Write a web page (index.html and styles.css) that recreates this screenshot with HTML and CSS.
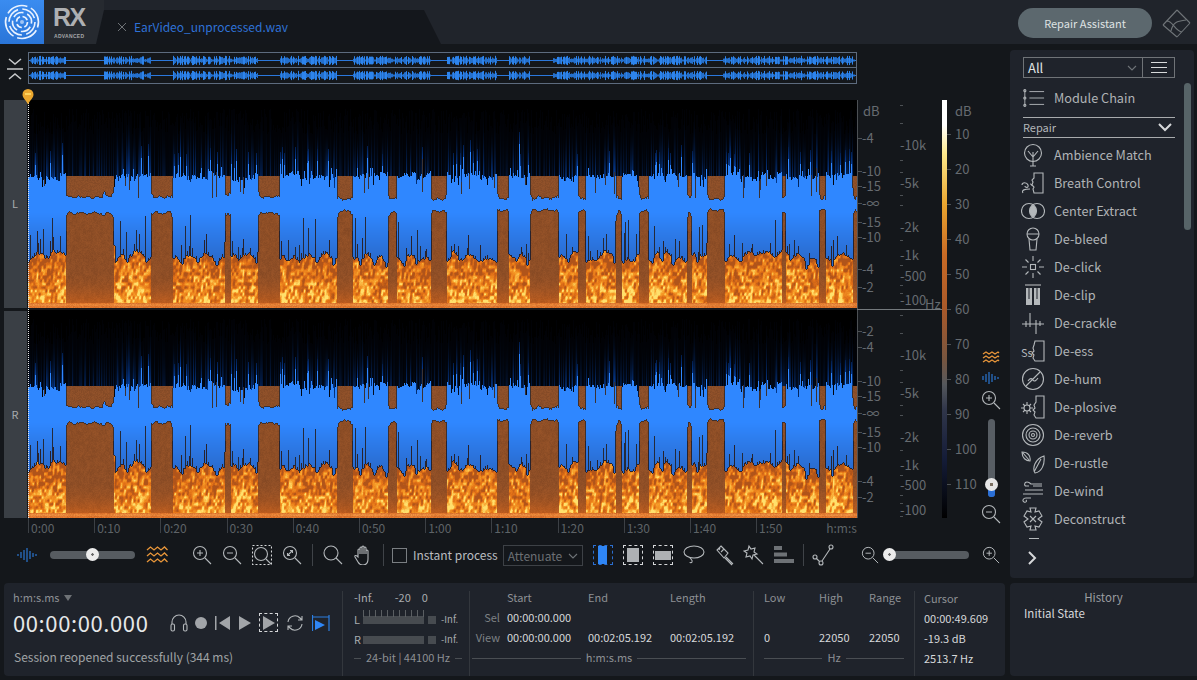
FILE: index.html
```html
<!DOCTYPE html>
<html lang="en">
<head>
<meta charset="utf-8">
<title>RX Advanced</title>
<link rel="stylesheet" href="styles.css">
</head>
<body>
<header class="topbar">
  <div class="logo">
    <svg viewBox="0 0 44 44" width="44" height="44" class="logo-svg">
      <circle cx="22" cy="22" r="2" class="l1"/>
      <circle cx="22" cy="22" r="5.5" class="l2 d1"/>
      <circle cx="22" cy="22" r="9.5" class="l2 d2"/>
      <circle cx="22" cy="22" r="13" class="l2 d3"/>
      <circle cx="22" cy="22" r="16.5" class="l2 d4"/>
    </svg>
  </div>
  <div class="brand"><span class="rx">RX</span><span class="adv">ADVANCED</span></div>
  <div class="tab">
    <svg viewBox="0 0 12 12" width="12" height="12" class="tab-x"><path d="M2 2l8 8M10 2l-8 8"/></svg>
    <span class="tab-name">EarVideo_unprocessed.wav</span>
  </div>
  <div class="top-right">
    <button class="assist">Repair Assistant</button>
    <svg viewBox="0 0 32 32" width="32" height="32" class="ic dim"><path d="M3 18L17 3M17 30L30 16M3 18l14 12M17 3l13 13M7 14c6 0 8 10 15 11M11 24c2-10 8-10 15-11"/></svg>
  </div>
</header>

<div class="main">
  <section class="work">
    <div class="overview-row">
      <svg viewBox="0 0 16 24" width="16" height="24" class="ic collapse"><path d="M2 2l6 5 6-5M0 12h16M2 22l6-5 6 5"/></svg>
      <canvas id="overview" width="829" height="33" class="overview"></canvas>
    </div>
    <div class="spectro">
      <div class="chan-col">
        <div class="chan">L</div>
        <div class="chan">R</div>
      </div>
      <div class="canvas-wrap">
        <canvas id="spec" width="829" height="418" class="spec"></canvas>
        <div class="playline"></div>
        <svg viewBox="0 0 12 16" width="12" height="16" class="pin"><path d="M6 15.5C4 11 .5 9 .5 5.5a5.5 5.5 0 0 1 11 0C11.500 9 8 11 6 15.500z"/><path class="pin-hi" d="M3 5h6"/></svg>
      </div>
      <div class="side">
        <svg id="ruler" class="ruler" width="124" height="430" viewBox="857 100 124 430"></svg>
        <div class="vtools">
          <svg viewBox="0 0 20 16" width="20" height="16" class="ic orange"><path d="M2 4l3-2 3 2 3-2 3 2 3-2 1 1M2 8l3-2 3 2 3-2 3 2 3-2 1 1M2 12l3-2 3 2 3-2 3 2 3-2 1 1"/></svg>
          <svg viewBox="0 0 20 16" width="20" height="16" class="ic blue"><path d="M2 6v4M5 4v8M8 2v12M11 4v8M14 6v4M17 7v2"/></svg>
          <svg viewBox="0 0 20 20" width="20" height="20" class="ic"><circle cx="8" cy="8" r="6.500"/><path d="M13 13l6 6M5 8h6M8 5v6"/></svg>
          <div class="vslider"><span class="vfill"></span><span class="vthumb"></span></div>
          <svg viewBox="0 0 20 20" width="20" height="20" class="ic"><circle cx="8" cy="8" r="6.500"/><path d="M13 13l6 6M5 8h6"/></svg>
        </div>
      </div>
    </div>
    <div class="timeline">
      <span>0:00</span><span>0:10</span><span>0:20</span><span>0:30</span><span>0:40</span><span>0:50</span><span>1:00</span><span>1:10</span><span>1:20</span><span>1:30</span><span>1:40</span><span>1:50</span><b>h:m:s</b>
    </div>
    <div class="toolbar">
      <svg viewBox="0 0 20 16" width="20" height="16" class="ic blue t-first"><path d="M1 7v2M4 5v6M7 3v10M10 1v14M13 4v8M16 6v4M19 7v2"/></svg>
      <div class="hslider mid"><span class="hthumb"></span></div>
      <svg viewBox="0 0 22 20" width="22" height="20" class="ic orange t-wave"><path d="M1 5l3.500-3 3.500 3 3.500-3 3.500 3 3.500-3 3 3M1 11l3.500-3 3.500 3 3.500-3 3.500 3 3.500-3 3 3M1 17l3.500-3 3.500 3 3.500-3 3.500 3 3.500-3 3 3"/></svg>
      <div class="slots first-slots">
        <svg viewBox="0 0 20 20" width="20" height="20" class="ic"><circle cx="8" cy="8" r="6.500"/><path d="M13 13l6 6M5 8h6M8 5v6"/></svg>
        <svg viewBox="0 0 20 20" width="20" height="20" class="ic"><circle cx="8" cy="8" r="6.500"/><path d="M13 13l6 6M5 8h6"/></svg>
        <svg viewBox="0 0 20 20" width="20" height="20" class="ic"><rect x=".5" y=".5" width="19" height="19" class="dash"/><circle cx="9" cy="9" r="6.500"/><path d="M14 14l5 5"/></svg>
        <svg viewBox="0 0 20 20" width="20" height="20" class="ic"><circle cx="8" cy="8" r="6.500"/><path d="M13 13l6 6M5.500 10.500l5-5M8 5.500h2.500V8M5.500 8v2.500H8"/></svg>
        <i class="sep"></i>
        <svg viewBox="0 0 20 20" width="20" height="20" class="ic"><circle cx="8" cy="8" r="7"/><path d="M13 13l6 6"/></svg>
        <svg viewBox="0 0 20 20" width="20" height="20" class="ic"><path d="M5 12V5a1 1 0 0 1 2 0v4-6a1 1 0 0 1 2 0v6-7a1 1 0 0 1 2 0v7-6a1 1 0 0 1 2 0v6-3a1 1 0 0 1 2 0v8c0 4-2 6-5 6s-4-1-5-3l-3-5c-.7-1.500 1-2 2-1z"/></svg>
        <i class="sep"></i>
      </div>
      <span class="check"></span>
      <span class="instant">Instant process</span>
      <span class="select">Attenuate<svg viewBox="0 0 10 6" width="10" height="6" class="ic dim chev"><path d="M1 1l4 4 4-4"/></svg></span>
      <div class="slots second-slots">
        <span class="selbox active"><i></i></span>
        <span class="selbox"><i class="sq"></i></span>
        <span class="selbox"><i class="wide"></i></span>
        <svg viewBox="0 0 22 20" width="22" height="20" class="ic"><ellipse cx="11" cy="7" rx="10" ry="6"/><path d="M7 12c0 3 3 2 2 5-.5 1-2 1-2 0"/></svg>
        <svg viewBox="0 0 22 22" width="22" height="22" class="ic"><path d="M8 2l7 7-4 5-7-8zM11 5l-3 3M7 4l-1 2M13 13l7 7M12 14l7 7"/></svg>
        <svg viewBox="0 0 22 22" width="22" height="22" class="ic"><path d="M6 2l2 3 4-1-1 4 3 2-4 1-1 4-2-3-4 1 1-4-3-2 4-1zM11 11l9 9"/></svg>
        <svg viewBox="0 0 22 18" width="22" height="18" class="ic-bars"><rect x="1" width="8" height="4"/><rect x="1" y="6.500" width="13" height="4"/><rect x="1" y="13" width="20" height="4"/></svg>
        <i class="sep"></i>
        <svg viewBox="0 0 22 22" width="22" height="22" class="ic"><circle cx="3" cy="13" r="2"/><circle cx="9" cy="19" r="2"/><circle cx="19" cy="3" r="2"/><path d="M4.500 14.500l3 3M10 17l8-12"/></svg>
      </div>
      <svg viewBox="0 0 20 20" width="18" height="18" class="ic t-zoomout"><circle cx="8" cy="8" r="6.500"/><path d="M13 13l6 6M5 8h6"/></svg>
      <div class="hslider low"><span class="hthumb"></span></div>
      <svg viewBox="0 0 20 20" width="18" height="18" class="ic t-zoomin"><circle cx="8" cy="8" r="6.500"/><path d="M13 13l6 6M5 8h6M8 5v6"/></svg>
    </div>
  </section>

  <aside class="modules">
    <div class="combo-row">
      <div class="combo"><span>All</span><svg viewBox="0 0 10 6" width="10" height="6" class="ic dim"><path d="M1 1l4 4 4-4"/></svg></div>
      <div class="burger"><i></i><i></i><i></i></div>
    </div>
    <div class="m-item chain">
      <svg viewBox="0 0 24 24" width="22" height="22" class="ic"><path d="M7 5h16M7 12h16M7 19h16M2 3v18" class="dots"/><circle cx="2" cy="4" r="1.200"/><circle cx="2" cy="12" r="1.200"/><circle cx="2" cy="20" r="1.200"/></svg>
      <span>Module Chain</span>
    </div>
    <div class="group"><span>Repair</span><svg viewBox="0 0 14 9" width="14" height="9" class="ic bright"><path d="M1 1l6 6 6-6"/></svg></div>
    <div class="m-item"><svg viewBox="0 0 24 24" width="24" height="24" class="ic"><circle cx="12" cy="10" r="8.500"/><path d="M12 23V9M7 8l5 6 5-6M9 23h6"/></svg><span>Ambience Match</span></div>
    <div class="m-item"><svg viewBox="0 0 24 24" width="24" height="24" class="ic"><path d="M13 2h9v20h-9l-1-4 1-2-2-2 1-3-1-2 2-2zM1 14c0-3 5-3 6 0s-3 3-3 1M2 22c-2-3 2-4 7-4M9 13c1 0 2 1 2 2"/></svg><span>Breath Control</span></div>
    <div class="m-item"><svg viewBox="0 0 24 24" width="24" height="24" class="ic"><circle cx="8" cy="12" r="7.500"/><circle cx="16" cy="12" r="7.500"/><path class="solid" d="M12 5.700a7.500 7.500 0 0 1 0 12.600 7.500 7.500 0 0 1 0-12.600z"/></svg><span>Center Extract</span></div>
    <div class="m-item"><svg viewBox="0 0 24 24" width="24" height="24" class="ic"><circle cx="12" cy="7" r="6"/><path d="M6 7h12M8 12l1 11h6l1-11"/></svg><span>De-bleed</span></div>
    <div class="m-item"><svg viewBox="0 0 24 24" width="24" height="24" class="ic"><rect x="9.500" y="9.500" width="5" height="5"/><path d="M12 1v5M12 18v5M1 12h5M18 12h5M4.500 4.500l3 3M16.500 16.500l3 3M19.500 4.500l-3 3M7.500 16.500l-3 3"/></svg><span>De-click</span></div>
    <div class="m-item"><svg viewBox="0 0 24 24" width="24" height="24" class="ic"><path d="M4 2h16"/><path class="solid" d="M5 5h6v17H5zM13 5h6v17h-6z"/><path class="cut" d="M8 5v11M16 5v11"/></svg><span>De-clip</span></div>
    <div class="m-item"><svg viewBox="0 0 24 24" width="24" height="24" class="ic"><path d="M1 13h22M9 2v14M15 9v14M5 10v6M19 10v5"/></svg><span>De-crackle</span></div>
    <div class="m-item"><svg viewBox="0 0 24 24" width="24" height="24" class="ic"><text x="0" y="18" class="ic-text">Ss</text><path d="M14 2h9v20h-9l-2-3 1-3-2-2 2-2-1-3 1-3z"/></svg><span>De-ess</span></div>
    <div class="m-item"><svg viewBox="0 0 24 24" width="24" height="24" class="ic"><circle cx="12" cy="12" r="10.500"/><path d="M5 19L19 5M7 14c2-3 4-3 5-1s3 1 5-2"/></svg><span>De-hum</span></div>
    <div class="m-item"><svg viewBox="0 0 24 24" width="24" height="24" class="ic"><path d="M15 1h8v22h-8l-2-3 1-3-2-2 2-2-1-3 2-3z"/><circle cx="6" cy="13" r="3"/><path d="M6 7v3M6 16v3M0 13h3M9 13h3M2 9l2 2M8 15l2 2M10 9l-2 2M4 15l-2 2"/></svg><span>De-plosive</span></div>
    <div class="m-item"><svg viewBox="0 0 24 24" width="24" height="24" class="ic"><circle cx="12" cy="12" r="10.500"/><circle cx="12" cy="12" r="7"/><circle cx="12" cy="12" r="4"/><circle cx="12" cy="12" r="1.500"/></svg><span>De-reverb</span></div>
    <div class="m-item"><svg viewBox="0 0 24 24" width="24" height="24" class="ic"><path d="M1 1c6 0 9 4 8 9-4 0-8-3-8-9zM2 2l6 7M23 5c1 8-2 16-9 17-3-5 0-14 9-17zM13 21l7-13"/></svg><span>De-rustle</span></div>
    <div class="m-item"><svg viewBox="0 0 24 24" width="24" height="24" class="ic"><path d="M8 7H5c-2 0-2-4 1-4 2 0 3 1 4 2h11M4 11h18M2 15h20M10 19H5c-3 0-4 3-2 4s3-1 2-2M12 7h9"/></svg><span>De-wind</span></div>
    <div class="m-item"><svg viewBox="0 0 24 24" width="24" height="24" class="ic"><path d="M9 1h6l-1 4 4-1 3 5-4 3 4 3-3 5-4-1 1 4H9l1-4-4 1-3-5 4-3-4-3 3-5 4 1zM9 9l6 6M15 9l-6 6"/></svg><span>Deconstruct</span></div>
    <div class="m-peek"><i></i></div>
    <svg viewBox="0 0 10 14" width="10" height="14" class="ic bright more"><path d="M2 1l6 6-6 6"/></svg>
    <div class="scroll"></div>
  </aside>
</div>

<footer class="bottom">
  <div class="info">
    <div class="transport">
      <div class="fmt">h:m:s.ms <i class="tri"></i></div>
      <div class="clock-row">
        <span class="clock">00:00:00.000</span>
        <div class="tbtns">
          <svg viewBox="0 0 18 18" width="18" height="18" class="ic"><path d="M2 10V8a7 7 0 0 1 14 0v2"/><rect x="1" y="10" width="3.500" height="7" rx="1.500"/><rect x="13.500" y="10" width="3.500" height="7" rx="1.500"/></svg>
          <span class="rec"></span>
          <svg viewBox="0 0 16 14" width="16" height="14" class="solid-ic"><path d="M0 0h1.500v14H0zM15 0v14L4 7z"/></svg>
          <svg viewBox="0 0 14 14" width="14" height="14" class="solid-ic"><path d="M1 0v14l12-7z"/></svg>
          <span class="playsel"><svg viewBox="0 0 14 14" width="14" height="14" class="solid-ic"><path d="M1 0v14l12-7z"/></svg></span>
          <svg viewBox="0 0 20 20" width="20" height="20" class="ic"><path d="M3 9a7 7 0 0 1 12-4l2 2M17 11a7 7 0 0 1-12 4l-2-2M17 3v4h-4M3 17v-4h4"/></svg>
          <svg viewBox="0 0 18 18" width="18" height="18" class="loop"><path class="loop-l" d="M.5 1v16M17 1v16M1 3h16"/><path class="loop-p" d="M3 6v10l10-5z"/></svg>
        </div>
      </div>
      <div class="status">Session reopened successfully (344 ms)</div>
    </div>
    <div class="meter">
      <div class="meter-scale"><span>-Inf.</span><span>-20</span><span>0</span></div>
      <div class="meter-row tick"><span>L</span><i></i><u></u><small>-Inf.</small></div>
      <div class="meter-row"><span>R</span><i></i><u></u><small>-Inf.</small></div>
      <div class="rule-label"><em></em><span>24-bit | 44100 Hz</span><em></em></div>
    </div>
    <div class="times">
      <div class="grid-times">
        <span></span><span class="h">Start</span><span class="h">End</span><span class="h">Length</span>
        <span class="rl">Sel</span><span>00:00:00.000</span><span></span><span></span>
        <span class="rl">View</span><span>00:00:00.000</span><span>00:02:05.192</span><span>00:02:05.192</span>
      </div>
      <div class="rule-label"><em></em><span>h:m:s.ms</span><em></em></div>
    </div>
    <div class="freq">
      <div class="grid-freq">
        <span class="h">Low</span><span class="h">High</span><span class="h">Range</span>
        <span></span><span></span><span></span>
        <span>0</span><span>22050</span><span>22050</span>
      </div>
      <div class="rule-label"><em></em><span>Hz</span><em></em></div>
    </div>
    <div class="cursor">
      <span class="h">Cursor</span>
      <span>00:00:49.609</span>
      <span>-19.3 dB</span>
      <span>2513.7 Hz</span>
    </div>
  </div>
  <div class="history">
    <div class="hist-title">History</div>
    <div class="hist-item">Initial State</div>
  </div>
</footer>
<script src="script.js"></script>
</body>
</html>
```
FILE: styles.css
```css
* { box-sizing: border-box; }
html, body { margin: 0; height: 680px; overflow: hidden; }
body {
  width: 1197px;
  background: #14171b;
  color: #c3c6c9;
  font: 12px/1.2 "Noto Sans CJK SC", "Noto Sans", sans-serif;
}
svg { display: block; flex: none; }
.ic { fill: none; stroke: #b4b8bb; stroke-width: 1.1; }
.ic.dim { stroke: #6f7478; }
.ic.bright { stroke: #d6d8da; stroke-width: 2; }
.ic.blue { stroke: #2c7ee0; }
.ic.orange { stroke: #e8963a; stroke-width: 1.3; }
.ic .dash { stroke: #d5d7d9; stroke-dasharray: 2 2; }
.ic .solid { fill: #b4b8bb; stroke: none; }
.ic .cut { stroke: #1f232b; stroke-width: 1; }
.ic-text { fill: #b4b8bb; stroke: none; font-size: 11px; }
.ic-bars { fill: #6e7276; }
.solid-ic { fill: #a2a5a9; }

/* top bar */
.topbar { display: flex; height: 44px; background: #20242b; }
.logo { width: 44px; height: 44px; background: linear-gradient(#3a8cf0, #2a75d8); }
.logo-svg { fill: none; stroke: #e9f2ff; }
.logo-svg .l1 { fill: #e9f2ff; stroke: none; opacity: .6; }
.logo-svg .l2 { stroke-width: 1.6; transform-origin: 22px 22px; }
.d1 { stroke-dasharray: 6 2.6; }
.d2 { stroke-dasharray: 11 4; transform: rotate(30deg); }
.d3 { stroke-dasharray: 16 4.400; }
.d4 { stroke-dasharray: 22 4; transform: rotate(30deg); }
.brand { width: 60px; padding: 5px 0 0 9px; display: flex; flex-direction: column; background: #262a30; }
.rx { font: 700 25px/25px "Liberation Sans", sans-serif; color: #aeb0b2; letter-spacing: -1.5px; }
.adv { font: 700 5px/6px "Liberation Sans", sans-serif; color: #a5a7a9; letter-spacing: .3px; margin: 3px 0 0 1px; }
.tab {
  margin: 10px 0 0 -8px; width: 345px; height: 34px; padding: 0 0 0 20px;
  background: #14171c; display: flex; align-items: center; gap: 6px;
  clip-path: polygon(8px 0, 328px 0, 100% 100%, 0 100%);
}
.tab-x { fill: none; stroke: #6e7276; }
.tab-name { color: #2f72d6; font-size: 12px; }
.top-right { margin-left: auto; padding: 7px 5px 0 0; display: flex; gap: 8px; align-items: flex-start; }
.assist {
  width: 134px; height: 30px; margin-top: 1px; border: 0; border-radius: 15px;
  background: #5c686e; color: #dfe2e3; font: 11px "Noto Sans CJK SC", sans-serif;
}

/* main */
.main { display: flex; height: 539px; }
.work { width: 1010px; }
.overview-row { display: flex; height: 41px; padding-top: 8px; align-items: flex-start; }
.collapse { margin: 5px 0 0 7px; stroke: #c8cacc; stroke-width: 1.5; }
.overview { display: block; margin-left: 5px; }
.spectro { display: flex; height: 418px; margin-top: 15px; }
.chan-col { width: 28px; padding-left: 4px; display: flex; flex-direction: column; gap: 3px; }
.chan {
  height: 207.500px; width: 23px; background: #3a3f45; color: #a9acae; font-size: 11px;
  display: flex; align-items: center; justify-content: center; padding-right: 1px;
}
.canvas-wrap { position: relative; width: 829px; height: 418px; }
.spec { display: block; }
.playline { position: absolute; left: 0; top: -4px; height: 422px; border-left: 1px dotted #e8e8e8; }
.pin { position: absolute; left: -6px; top: -11px; fill: #eba72f; }
.pin-hi { stroke: #ffd35c; stroke-width: 2; fill: none; }
.side { display: flex; width: 153px; }
.ruler { overflow: visible; }
.rt { fill: #666b70; font-size: 13px; }
.rl-line { stroke: #74797d; stroke-width: 1; }
.rl-dim { stroke: #4c5054; stroke-width: 1; }
.vtools { width: 20px; height: 440px; padding-top: 250px; display: flex; flex-direction: column; align-items: center; gap: 4px; }
.vslider { position: relative; flex: none; width: 7px; height: 78px; margin: 5px 0 3px; background: #585e64; border-radius: 3.500px; }
.vfill { position: absolute; left: 0; right: 0; bottom: 0; height: 14px; background: #2a6fd6; border-radius: 3px; }
.vthumb {
  position: absolute; left: -3px; bottom: 6px; width: 13px; height: 13px; border-radius: 50%;
  background: radial-gradient(#7a6e60 0 1.500px, #e6e6e6 2px);
}

/* timeline */
.timeline { display: flex; height: 18px; padding-left: 28px; color: #5e6367; font-size: 12px; line-height: 20px; }
.timeline span { width: 66.200px; border-left: 1px solid #3c4045; padding-left: 2px; height: 15px; line-height: 19px; }
.timeline b { font-weight: 400; margin-left: 4px; line-height: 19px; }

/* toolbar */
.toolbar { display: flex; align-items: center; height: 44px; padding-bottom: 6px; }
.t-first { margin-left: 17px; }
.hslider { position: relative; flex: none; height: 8px; background: #575c61; border-radius: 4px; width: 85px; }
.hslider.mid { margin-left: 13px; }
.hslider.low { margin-left: 5px; }
.hthumb {
  position: absolute; top: -3px; width: 13px; height: 13px; border-radius: 50%;
  background: radial-gradient(#6a6a6a 0 1px, #ececec 1.500px);
}
.mid .hthumb { left: 36px; }
.low .hthumb { left: -1px; }
.t-wave { margin-left: 11px; }
.slots { display: flex; align-items: center; gap: 10px; }
.first-slots { margin-left: 24px; }
.sep { width: 1px; height: 22px; background: #3f4348; }
.check { width: 15px; height: 15px; border: 1px solid #7a7e82; margin-left: 8px; flex: none; }
.instant { margin-left: 6px; font-size: 12px; color: #babdc0; white-space: nowrap; }
.select {
  margin-left: 5px; width: 80px; height: 21px; border: 1px solid #3d4146; color: #6c7074; font-size: 12px;
  display: flex; align-items: center; justify-content: space-between; padding: 0 4px 0 4px; flex: none; line-height: 19px;
}
.chev { margin-top: 1px; }
.second-slots { margin-left: 10px; gap: 8px; }
.selbox {
  width: 20px; height: 20px; border: 1px dashed #d5d7d9; display: flex; align-items: center; justify-content: center; flex: none; margin-right: 2px;
}
.selbox.active { border-color: #2c6fd0; }
.selbox i { display: block; width: 8px; height: 16px; background: #2f86f5; }
.selbox i.sq { width: 12px; height: 14px; background: #aeb1b4; }
.selbox i.wide { width: 16px; height: 9px; background: #aeb1b4; }
.selbox.active i { height: 18px; width: 9px; }
.t-zoomout { margin-left: 27px; }
.t-zoomin { margin-left: 13px; }

/* modules */
.modules {
  position: relative; width: 184px; height: 528px; margin-top: 6px; padding: 7px 0 0 13px;
  background: #1f232b; border-radius: 4px;
}
.combo-row { display: flex; width: 152px; height: 21px; border: 1px solid #6f7377; }
.combo { flex: 1; display: flex; justify-content: space-between; align-items: center; padding: 0 5px 0 4px; color: #dfe1e2; font-size: 13px; border-right: 1px solid #6f7377; }
.burger { width: 31px; display: flex; flex-direction: column; gap: 4px; align-items: center; justify-content: center; }
.burger i { display: block; width: 16px; height: 1px; background: #d8dadb; }
.m-item { display: flex; align-items: center; height: 28px; color: #b0b3b6; font-size: 12.700px; white-space: nowrap; }
.m-item svg { margin-right: 9px; margin-left: -2px; }
.chain { height: 39px; }
.chain svg { margin-left: 0; margin-right: 9px; }
.chain .dots { stroke-width: 1; }
.group {
  display: flex; width: 152px; height: 21px; padding: 0 3px 0 0; justify-content: space-between; align-items: center;
  border-top: 1px solid #a8abad; border-bottom: 1px solid #a8abad; color: #b4b7ba; font-size: 11px; margin-bottom: 3px;
}
.m-peek { height: 7px; padding: 5px 0 0 6px; }
.m-peek i { display: block; width: 10px; height: 1px; background: #b4b8bb; }
.more { margin: 11px 0 0 4px; }
.scroll { position: absolute; left: 174px; top: 33px; width: 7px; height: 147px; background: #576468; border-radius: 4px; }

/* bottom */
.bottom { display: flex; gap: 5px; height: 93px; margin-left: 4px; }
.info { display: flex; width: 1001px; background: #1f232b; border-radius: 4px; padding: 8px 0 0; font-size: 11px; }
.info > div + div { border-left: 1px solid #33373d; }
.transport { width: 338px; padding: 0 0 0 9px; }
.fmt { display: flex; gap: 4px; align-items: center; color: #8d9094; height: 14px; font-size: 11px; }
.tri { border: 4.500px solid transparent; border-top: 6px solid #6e7276; border-bottom: 0; }
.clock-row { display: flex; align-items: center; height: 37px; margin-top: -1px; }
.clock { width: 157px; flex: none; font-size: 22px; color: #e6e8e9; letter-spacing: .6px; }
.tbtns { display: flex; align-items: center; gap: 7px; }
.rec { width: 12px; height: 12px; border-radius: 50%; background: #a2a5a9; margin-right: 1px; }
.playsel { border: 1px dashed #d5d7d9; width: 19px; height: 19px; display: flex; align-items: center; justify-content: center; }
.loop { fill: none; }
.loop-l { stroke: #2c7ee0; stroke-width: 1.2; }
.loop-p { fill: #2f86f5; }
.status { margin: 9px 0 0 1px; color: #a0a3a6; font-size: 12px; }
.meter { width: 127px; padding: 0 7px 0 11px; display: flex; flex-direction: column; }
.meter-scale { display: flex; color: #a9acaf; height: 15px; }
.meter-scale span:nth-child(2) { margin-left: 21px; }
.meter-scale span:nth-child(3) { margin-left: 11px; }
.meter-row { position: relative; display: flex; align-items: center; height: 20px; color: #a9acaf; }
.meter-row.tick { margin-top: 4px; }
.meter-row.tick::before {
  content: ""; position: absolute; left: 9px; top: 0; width: 61px; height: 7px;
  background: repeating-linear-gradient(90deg, #5a5e62 0 1px, transparent 1px 6px);
}
.meter-row span { width: 9px; }
.meter-row i { width: 61px; height: 8px; background: #474b50; }
.meter-row u { width: 8px; height: 8px; background: #474b50; margin-left: 4px; }
.meter-row small { font-size: 9.500px; margin-left: 5px; }
.rule-label { display: flex; align-items: center; gap: 5px; color: #8d9094; height: 16px; white-space: nowrap; }
.rule-label em { flex: 1; height: 1px; background: #4a4e53; }
.times { width: 284px; padding: 0 7px 0 2px; }
.grid-times, .grid-freq { display: grid; grid-auto-rows: 20px; align-items: center; height: 58px; margin-top: -3px; margin-bottom: 4px; color: #d6d8da; }
.grid-times { grid-template-columns: 35px 81px 82px auto; }
.h { color: #8d9094; }
.rl { text-align: right; padding-right: 7px; color: #7d8185; }
.freq { width: 161px; padding: 0 10px; }
.grid-freq { grid-template-columns: 55px 50px auto; }
.cursor { flex: 1; padding: 0 0 0 9px; display: flex; flex-direction: column; color: #d6d8da; }
.cursor span { height: 20px; line-height: 15px; }
.history { width: 187px; background: #1f232b; border-radius: 4px 0 0 4px; padding: 8px 0 0 14px; }
.hist-title { text-align: center; color: #9a9da0; padding-right: 14px; font-size: 11.500px; }
.hist-item { color: #d6d8da; margin-top: 2px; font-size: 11.500px; }
```
FILE: script.js
```js
(function () {
  var W = 829, X0 = 28;
  var seed = 12345;
  function r() {
    seed = (seed + 0x6D2B79F5) | 0;
    var t = Math.imul(seed ^ (seed >>> 15), 1 | seed);
    t = (t + Math.imul(t ^ (t >>> 7), 61 | t)) ^ t;
    return ((t ^ (t >>> 14)) >>> 0) / 4294967296;
  }
  // [x0, x1, upper brown end, lower brown start]
  var blocks = [
    [66, 103, 197, 212], [104, 113, 196, 212], [151, 172, 197, 212], [225, 230, 195, 212],
    [258, 279, 197, 212], [337, 352, 199, 210], [388, 396, 199, 211], [431, 446, 199, 210],
    [497, 508, 199, 209], [530, 538, 199, 209], [539, 558, 198, 209], [578, 585, 199, 210],
    [616, 621, 199, 210], [639, 648, 199, 210], [687, 691, 199, 211], [707, 724, 199, 209],
    [782, 785, 198, 211], [819, 825, 199, 209], [853, 857, 199, 209]
  ];
  var col = [];
  var oPhase = 0, oLen = 0, oBase = 254, oAmp = 8, eLen = 0, eBase = 172, sLen = 0, sB = 0.5, sPrev = 0.5, sFull = 1;
  for (var i = 0; i < W; i++) {
    var x = i + X0, b = null;
    for (var k = 0; k < blocks.length; k++) {
      if (x >= blocks[k][0] && x <= blocks[k][1]) b = blocks[k];
    }
    if (oPhase >= oLen) { oLen = 8 + Math.floor(r() * 14); oPhase = 0; oBase = 250 + r() * 8; oAmp = 3 + r() * 8; }
    if (eLen-- <= 0) { eLen = 3 + Math.floor(r() * 10); eBase = 170 + r() * 6; }
    if (sLen-- <= 0) { sFull = 5 + Math.floor(r() * 7); sLen = sFull; sPrev = sB; sB = r(); }
    var top = eBase + r() * 5;
    if (r() < 0.16) top -= 3 + r() * 14;
    if (r() < 0.025) top -= 8 + r() * 10;
    if (r() < 0.14) top += r() * 10;
    var orange = oBase + oAmp * (1 - Math.sin(Math.PI * oPhase / oLen)) + (r() - 0.5) * 4;
    if (r() < 0.1) orange -= 5 + r() * 16;
    oPhase++;
    var ue = 0, ls = 0;
    if (b) {
      var dist = Math.min(x - b[0], b[1] - x);
      ue = b[2] + Math.sin(x * 0.7) * 0.8 + (r() - 0.5) * 1.2;
      ls = b[3] + Math.sin(x * 0.5 + 2) * 0.8 + (r() - 0.5) * 1.4;
      if (dist < 2) { ue -= (2 - dist) * r() * 3; ls += (2 - dist) * r() * 2.5; }
    }
    col.push({
      b: b, top: top, orange: orange, ue: ue, ls: ls,
      streak: r() < 0.5 ? 0.25 + r() * 0.75 : r() * 0.2,
      st: 108 + r() * 26,
      notchUp: r() < 0.06 ? 184 + r() * 14 : 0,
      notchDn: r() < 0.075 ? 214 + r() * 34 : 0,
      lum: sPrev + (sB - sPrev) * (1 - sLen / sFull)
    });
  }
  // value noise with small cells, sheared so blobs sit on slanted rows
  function Noise(s) {
    seed = s;
    this.w = W + 4; this.h = 80; this.d = [];
    for (var q = 0; q < this.w * this.h; q++) this.d.push(r());
  }
  Noise.prototype.at = function (x, y) {
    var fx = x / 2.1 + y * 0.05, fy = y / 3.4;
    var ix = Math.floor(fx), iy = Math.floor(fy);
    var tx = fx - ix, ty = fy - iy;
    tx = tx * tx * (3 - 2 * tx); ty = ty * ty * (3 - 2 * ty);
    var w = this.w, h = this.h, d = this.d;
    function g(a, c) { return d[((c % h) * w + (a % w))]; }
    var a0 = g(ix, iy) + (g(ix + 1, iy) - g(ix, iy)) * tx;
    var a1 = g(ix, iy + 1) + (g(ix + 1, iy + 1) - g(ix, iy + 1)) * tx;
    return a0 + (a1 - a0) * ty;
  };
  function lerp(a, b, t) { return a + (b - a) * t; }
  function mix(c1, c2, t) { return [lerp(c1[0], c2[0], t), lerp(c1[1], c2[1], t), lerp(c1[2], c2[2], t)]; }
  function blue(y) {
    var t = Math.max(0, Math.min(1, (y - 212) / 45));
    return mix([47, 135, 255], [42, 108, 208], t);
  }
  function brown(y, n) {
    var t = Math.max(0, Math.min(1, (y - 268) / 35));
    var c = mix([142, 78, 38], [188, 92, 30], t * t);
    var m = (n - 0.5) * 22;
    return [c[0] + m, c[1] + m * 0.6, c[2] + m * 0.3];
  }
  function fire(v) {
    if (v < 0.35) return mix([176, 84, 26], [226, 112, 22], v / 0.35);
    if (v < 0.68) return mix([226, 112, 22], [246, 154, 38], (v - 0.35) / 0.33);
    return mix([246, 154, 38], [255, 224, 108], Math.min(1, (v - 0.68) / 0.32));
  }
  // 0 black, 1 blue, 2 brown/orange, 3 dark stem
  function region(c, y) {
    if (c.b) {
      if (y < 176) return 0;
      if (y < c.ue) return 2;
      if (y < c.ls) return 1;
      return 2;
    }
    if (y < c.top) return 0;
    if (c.notchUp && y < c.notchUp) return 3;
    if (c.notchDn && y > c.notchDn && y < c.orange) return 3;
    return y < c.orange ? 1 : 2;
  }
  function pixel(i, y, c, nz, fine) {
    if (y >= 303) {
      var g = y === 304 || y === 305 ? 0.5 : 0.2;
      var base = mix([216, 108, 38], [250, 168, 84], g * (c.b ? 0.7 : 1));
      var m = (fine - 0.5) * 22;
      return [base[0] + m, base[1] + m, base[2] + m * 0.5];
    }
    var rg = region(c, y);
    if (rg === 0) {
      var t0 = c.b ? 176 : c.top;
      if (y < c.st) return [0, 0, 0];
      var s = (y - c.st) / (t0 - c.st);
      var k = c.streak * s * s * (c.b ? 0.45 : 0.85);
      if (!c.b && c.top < 166 && y > c.top - 12) k = Math.max(k, 0.8 * (1 - (c.top - y) / 24));
      return [4 * k + 1, 70 * k + 2, 175 * k + 6];
    }
    if (rg === 3) return y < 200 ? [58, 50, 52] : [36, 42, 58];
    if (rg === 1) return blue(y);
    var L = i > 0 ? col[i - 1] : c, R = i < W - 1 ? col[i + 1] : c;
    if (region(L, y) === 1 || region(R, y) === 1 || region(c, y - 1) === 1 || region(c, y + 1) === 1) {
      return y > 230 ? [40, 34, 44] : [64, 48, 44];
    }
    if (c.b) return y < 200 ? mix(brown(230, fine), [132, 78, 46], 0.3) : brown(y, nz * 0.5 + fine * 0.5);
    var d = (y - c.orange) / (303 - c.orange);
    var v = 0.12 + d * 0.58 + (nz - 0.5) * 1.25 + (c.lum - 0.5) * 0.22 + (fine - 0.5) * 0.1;
    return fire(Math.max(0, Math.min(1, v)));
  }
  var noises = [new Noise(101), new Noise(202)];
  seed = 555;
  var ctx = document.getElementById('spec').getContext('2d');
  var img = ctx.createImageData(W, 418);
  for (var ch = 0; ch < 2; ch++) {
    for (var yy = 0; yy < 208; yy++) {
      var yAbs = yy + 100;
      for (var ii = 0; ii < W; ii++) {
        var p = pixel(ii, yAbs, col[ii], noises[ch].at(ii, yy), r());
        var idx = ((yy + ch * 210) * W + ii) * 4;
        img.data[idx] = p[0];
        img.data[idx + 1] = p[1];
        img.data[idx + 2] = p[2];
        img.data[idx + 3] = 255;
      }
    }
  }
  ctx.putImageData(img, 0, 0);
  ctx.fillStyle = '#14171b';
  ctx.fillRect(0, 208, W, 2);

  // overview
  var ov = document.getElementById('overview').getContext('2d');
  ov.fillStyle = '#5d6b7e';
  ov.fillRect(0, 0, W, 1);
  ov.fillRect(0, 15, W, 1);
  ov.fillRect(0, 31, W, 1);
  ov.fillRect(0, 0, 1, 32);
  ov.fillRect(W - 1, 0, 1, 32);
  var pauses = [[66, 103], [151, 172], [258, 279], [337, 352], [431, 446], [497, 508], [530, 552], [707, 722]];
  [8, 23].forEach(function (cy) {
    ov.fillStyle = '#2b78dc';
    ov.fillRect(1, cy, W - 2, 1);
    seed = 777;
    for (var i2 = 2; i2 < W - 2; i2++) {
      var xa = i2 + X0, p2 = false;
      for (var q = 0; q < pauses.length; q++) if (xa >= pauses[q][0] && xa <= pauses[q][1]) p2 = true;
      if (p2) continue;
      var a = 1 + r() * 3.2;
      if (r() < 0.1) a = 0.5;
      ov.fillStyle = a > 3 ? '#2d84ec' : '#2570cc';
      ov.fillRect(i2, cy - a, 1, a * 2 + 1);
    }
  });

  // rulers
  var NS = 'http://www.w3.org/2000/svg';
  var svg = document.getElementById('ruler');
  function text(x, y, s) {
    var t = document.createElementNS(NS, 'text');
    t.setAttribute('x', x); t.setAttribute('y', y + 4.5); t.setAttribute('class', 'rt');
    t.textContent = s; svg.appendChild(t);
  }
  function line(x1, y1, x2, y2, cls) {
    var l = document.createElementNS(NS, 'line');
    l.setAttribute('x1', x1); l.setAttribute('y1', y1); l.setAttribute('x2', x2); l.setAttribute('y2', y2);
    l.setAttribute('class', cls); svg.appendChild(l);
  }
  line(857.5, 100, 857.5, 518, 'rl-dim');
  line(857, 309.5, 942, 309.5, 'rl-line');
  var db = [['-4', 138], ['-10', 171], ['-15', 186], ['-\u221E', 203], ['-15', 222], ['-10', 237], ['-4', 269], ['-2', 287],
            ['-2', 331], ['-4', 347], ['-10', 381], ['-15', 396], ['-\u221E', 413], ['-15', 432], ['-10', 447], ['-4', 481], ['-2', 497]];
  db.forEach(function (d) {
    line(858, d[1] + 0.5, 862, d[1] + 0.5, 'rl-dim');
    text(862, d[1], d[0]);
  });
  text(863, 111, 'dB');
  var hz = [['-10k', 145], ['-5k', 183], ['-2k', 227], ['-1k', 255], ['-500', 276], ['-100', 300],
            ['-10k', 355], ['-5k', 393], ['-2k', 437], ['-1k', 465], ['-500', 485], ['-100', 510]];
  hz.forEach(function (d) { text(900, d[1], d[0]); });
  [105, 123, 160, 172, 195, 205, 240, 265, 285, 293, 315, 333, 370, 382, 405, 415, 450, 475, 495, 503, 516].forEach(function (y) {
    line(900, y + 0.5, 903, y + 0.5, 'rl-dim');
  });
  text(925, 304, 'Hz');
  var grad = document.createElementNS(NS, 'defs');
  grad.innerHTML = '<linearGradient id="cb" x1="0" y1="0" x2="0" y2="1">' +
    '<stop offset="0" stop-color="#fff"/><stop offset=".06" stop-color="#fff"/><stop offset=".13" stop-color="#fde88a"/>' +
    '<stop offset=".25" stop-color="#eaa52f"/><stop offset=".37" stop-color="#c86a25"/><stop offset=".5" stop-color="#a9592a"/>' +
    '<stop offset=".62" stop-color="#77553f"/><stop offset=".68" stop-color="#55585c"/><stop offset=".74" stop-color="#30364a"/>' +
    '<stop offset=".86" stop-color="#141c38"/><stop offset="1" stop-color="#000"/></linearGradient>';
  svg.appendChild(grad);
  var bar = document.createElementNS(NS, 'rect');
  bar.setAttribute('x', 942); bar.setAttribute('y', 100); bar.setAttribute('width', 5); bar.setAttribute('height', 418);
  bar.setAttribute('fill', 'url(#cb)');
  svg.appendChild(bar);
  text(955, 111, 'dB');
  for (var m = 1; m <= 11; m++) {
    var yy2 = 99 + m * 35;
    line(947, yy2 + 0.5, 951, yy2 + 0.5, 'rl-dim');
    text(955, yy2, String(m * 10));
  }
})();
```
